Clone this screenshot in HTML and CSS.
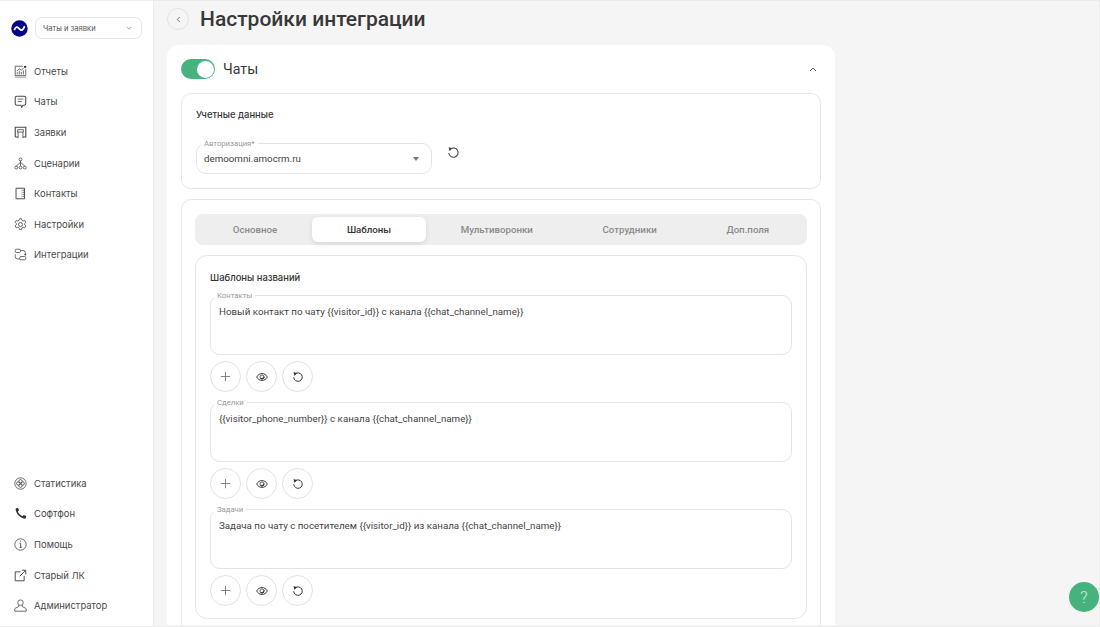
FILE: index.html
```html
<!DOCTYPE html>
<html lang="ru">
<head>
<meta charset="utf-8">
<title>Настройки интеграции</title>
<link rel="stylesheet" href="styles.css">
</head>
<body>
<svg class="defs" width="0" height="0" aria-hidden="true">
  <symbol id="i-reset" viewBox="0 0 14 14"><path d="M3.700 3.300A5 5 0 1 1 2 7.800" fill="none" stroke="currentColor" stroke-width="1.150" stroke-linecap="round"/><path d="M1.800 1.300l4.200 1.200-3.300 3z" fill="currentColor"/></symbol>
  <symbol id="i-plus" viewBox="0 0 14 14"><path d="M7 1v12M1 7h12" fill="none" stroke="currentColor" stroke-width="1"/></symbol>
  <symbol id="i-eye" viewBox="0 0 14 14"><path d="M.8 7C2.200 4.300 4.400 3 7 3s4.800 1.300 6.200 4C11.800 9.700 9.600 11 7 11S2.200 9.700.8 7z" fill="none" stroke="currentColor" stroke-width="1.100"/><circle cx="7" cy="7" r="2.400" fill="none" stroke="currentColor" stroke-width=".9"/><path d="M9.400 6.600A2.400 2.400 0 0 1 5.400 8.800C7.400 8.800 8.800 8 9.400 6.600z" fill="currentColor" stroke="currentColor" stroke-width=".7"/></symbol>
</svg>
<div class="app">
  <aside class="sidebar">
    <div class="brand">
      <svg class="logo" viewBox="0 0 18 18"><circle cx="9" cy="9" r="8.700" fill="#06068c"/><path d="M3.800 10C4.800 7.300 6.500 7 8 8.500s3.200 3.200 4.600 1.300c.6-.8 1-1.500 1.500-2.600" fill="none" stroke="#fff" stroke-width="1.900" stroke-linecap="round"/></svg>
      <div class="switcher"><span>Чаты и заявки</span><svg class="sw-chev" viewBox="0 0 8 5"><path d="M1 1l3 3 3-3" fill="none" stroke="#888" stroke-width=".9"/></svg></div>
    </div>
    <nav class="nav">
      <div class="nav-group">
        <a class="nav-item"><svg viewBox="0 0 16 16"><path d="M11 1.500H1.500v11.500h13V5"/><path d="M1 15h14" stroke="#aaa" stroke-width="1.500"/><path d="M4 11.500V9M6.500 11.500V7M9 11.500V8.500M11.500 11.500V6.500M3.500 7.500L6.500 4.500 9 6.500 12 3.500"/><circle cx="13.700" cy="2.300" r="1.500" fill="#333" stroke="none"/></svg>Отчеты</a>
        <a class="nav-item"><svg viewBox="0 0 16 16"><path d="M3.500 1.500h9A2 2 0 0 1 14.500 3.500v7a2 2 0 0 1-2 2H11L9.500 15 8.500 12.500h-5a2 2 0 0 1-2-2v-7a2 2 0 0 1 2-2z" stroke-width="1.300"/><path d="M4.500 5h7M4.500 8h5"/></svg>Чаты</a>
        <a class="nav-item"><svg viewBox="0 0 16 16"><path d="M1.500 13.500v-12h13v12h-3.500M1.500 13.500H5" stroke-width="1.400"/><path d="M4.500 4.500h7v3h-7zM5 7.500V15M11 7.500V15"/></svg>Заявки</a>
        <a class="nav-item"><svg viewBox="0 0 16 16"><circle cx="8" cy="3" r="1.800"/><circle cx="2.800" cy="13" r="1.800"/><circle cx="8" cy="13" r="1.800"/><circle cx="13.200" cy="13" r="1.800"/><path d="M8 4.800v6.400M2.800 11.200L8 6.500l5.200 4.700"/></svg>Сценарии</a>
        <a class="nav-item"><svg viewBox="0 0 16 16"><path d="M2.500 1.500h10.500v13H2.500z" stroke-width="1.200"/><path d="M13 4h-2.500M13 6.500h-2.500M13 9h-2.500M13 11.500h-2.500"/><path d="M9.500 1.500v13"  stroke="#999" stroke-width=".5"/></svg>Контакты</a>
        <a class="nav-item"><svg viewBox="0 0 16 16"><path d="M6.700 1h2.600l.5 2 1.500.8 2-.7 1.300 2.300-1.500 1.400v1.500l1.500 1.400-1.300 2.300-2-.7-1.500.8-.5 2H6.700l-.5-2-1.500-.8-2 .7-1.300-2.300 1.500-1.400V7L1.400 5.400l1.300-2.300 2 .7 1.500-.8z"/><circle cx="8" cy="8" r="2.500"/></svg>Настройки</a>
        <a class="nav-item"><svg viewBox="0 0 16 16"><path d="M3 1.500h3.500A1.500 1.500 0 0 1 8 3v1A1.500 1.500 0 0 1 6.500 5.500H3A1.500 1.500 0 0 1 1.500 4V3A1.500 1.500 0 0 1 3 1.500zM8.500 10.500H13a1.500 1.500 0 0 1 1.500 1.500v1a1.500 1.500 0 0 1-1.500 1.500H8.500A1.500 1.500 0 0 1 7 13v-1a1.500 1.500 0 0 1 1.500-1.500zM8 3h3a3 3 0 0 1 3 3v3l-1.500-1.500M14 9l1-1.500M1.500 8v2.500a3 3 0 0 0 3 3H7"/></svg>Интеграции</a>
      </div>
      <div class="nav-group">
        <a class="nav-item"><svg viewBox="0 0 16 16"><circle cx="8" cy="8" r="7"/><circle cx="8" cy="5.300" r="2.100"/><circle cx="8" cy="10.700" r="2.100"/><circle cx="5.300" cy="8" r="2.100"/><circle cx="10.700" cy="8" r="2.100"/></svg>Статистика</a>
        <a class="nav-item"><svg viewBox="0 0 16 16"><path class="solid" d="M2.800 1.400L5 1l1.200 3.300L4.700 5.600C5.600 8 7.800 10.300 10.500 11.300l1.300-1.500 3.200 1.400-.4 2.300c-.1.700-.9 1.200-1.700 1C7.500 13.600 2.700 8.600 2 3.200c-.1-.8.200-1.600.8-1.800z"/></svg>Софтфон</a>
        <a class="nav-item"><svg viewBox="0 0 16 16"><circle cx="8" cy="8" r="7"/><path d="M6.700 6.500h1.500v5M6.800 11.500h2.800M7.600 3.800h1" stroke-width="1.100"/></svg>Помощь</a>
        <a class="nav-item"><svg viewBox="0 0 16 16"><path d="M8 3.500H1.500v11h11V8.500M9.500 1.500h5v5M14.500 1.500L7 9" stroke-width="1.200"/></svg>Старый ЛК</a>
        <a class="nav-item"><svg viewBox="0 0 16 16"><circle cx="8" cy="4.500" r="3.400"/><path d="M5.800 7.500V9.300L1.500 11.500a1 1 0 0 0-.5 1V15h14v-2.500a1 1 0 0 0-.5-1L10.200 9.300V7.500"/></svg>Администратор</a>
      </div>
    </nav>
  </aside>
  <main class="main">
    <header class="page-head">
      <button class="back"><svg viewBox="0 0 6 8"><path d="M4.500 1L1.500 4l3 3" fill="none" stroke="#555" stroke-width="1"/></svg></button>
      <h1>Настройки интеграции</h1>
    </header>
    <section class="card">
      <div class="card-head">
        <div class="toggle"><span class="knob"></span></div>
        <h2>Чаты</h2>
        <svg class="collapse" viewBox="0 0 8 5"><path d="M1 4l3-3 3 3" fill="none" stroke="#555" stroke-width="1"/></svg>
      </div>
      <div class="panel creds">
        <h3>Учетные данные</h3>
        <div class="auth-row">
          <div class="field select">
            <label>Авторизация*</label>
            <span>demoomni.amocrm.ru</span>
            <i class="caret"></i>
          </div>
          <svg class="reset-plain"><use href="#i-reset"/></svg>
        </div>
      </div>
      <div class="panel settings">
        <div class="tabs">
          <div class="tab">Основное</div>
          <div class="tab active">Шаблоны</div>
          <div class="tab">Мультиворонки</div>
          <div class="tab">Сотрудники</div>
          <div class="tab">Доп.поля</div>
        </div>
        <div class="panel templates">
          <h3>Шаблоны названий</h3>
          <div class="field area"><label>Контакты</label><span>Новый контакт по чату {{visitor_id}} с канала {{chat_channel_name}}</span></div>
          <div class="actions">
            <button class="round"><svg class="ic-plus"><use href="#i-plus"/></svg></button>
            <button class="round"><svg class="ic"><use href="#i-eye"/></svg></button>
            <button class="round"><svg class="ic"><use href="#i-reset"/></svg></button>
          </div>
          <div class="field area"><label>Сделки</label><span>{{visitor_phone_number}} с канала {{chat_channel_name}}</span></div>
          <div class="actions">
            <button class="round"><svg class="ic-plus"><use href="#i-plus"/></svg></button>
            <button class="round"><svg class="ic"><use href="#i-eye"/></svg></button>
            <button class="round"><svg class="ic"><use href="#i-reset"/></svg></button>
          </div>
          <div class="field area"><label>Задачи</label><span>Задача по чату с посетителем {{visitor_id}} из канала {{chat_channel_name}}</span></div>
          <div class="actions">
            <button class="round"><svg class="ic-plus"><use href="#i-plus"/></svg></button>
            <button class="round"><svg class="ic"><use href="#i-eye"/></svg></button>
            <button class="round"><svg class="ic"><use href="#i-reset"/></svg></button>
          </div>
        </div>
      </div>
    </section>
  </main>
</div>
<button class="help">?</button>
</body>
</html>
```
FILE: styles.css
```css
* { box-sizing: border-box; }
html, body { height: 100%; }
body {
  margin: 0;
  overflow: hidden;
  background: #f5f5f5;
  color: #333;
  font-family: Inter, "Liberation Sans", sans-serif;
}
.defs { display: block; height: 0; }
.app {
  display: flex;
  height: 627px;
  padding: 1px;
  overflow: hidden;
  border: 1px solid #ececec;
  border-width: 1px 1px 1px 0;
}
.sidebar {
  flex: 0 0 154px;
  display: flex;
  flex-direction: column;
  background: #fff;
  border-right: 1px solid #ececec;
  margin: -1px 0 -1px -1px;
  padding-left: 1px;
}
.brand {
  display: flex;
  align-items: center;
  gap: 7px;
  padding: 16px 11px 0 10px;
}
.logo { width: 17px; height: 17px; flex: none; }
.switcher {
  flex: 1;
  height: 22px;
  display: flex;
  align-items: center;
  justify-content: space-between;
  padding: 0 9px 0 7px;
  border: 1px solid #e4e4e4;
  border-radius: 7px;
  font-size: 7.600px;
  color: #555;
}
.sw-chev { width: 6px; height: 4px; }
.nav {
  flex: 1;
  display: flex;
  flex-direction: column;
  justify-content: space-between;
  padding: 17px 0 5px;
}
.nav-group { display: flex; flex-direction: column; }
.nav-item {
  height: 30.6px;
  display: flex;
  align-items: center;
  gap: 7px;
  padding-left: 13px;
  font-size: 9.450px;
  color: #4a4a4a;
}
.nav-item svg {
  width: 13px;
  height: 13px;
  flex: none;
  fill: none;
  stroke: #4a4a4a;
  stroke-width: 1;
}
.nav-item .solid { fill: #333; stroke: none; }
.main {
  flex: 0 0 auto;
  width: 668px;
  margin-left: 13px;
  display: flex;
  flex-direction: column;
  overflow: hidden;
}
.page-head {
  height: 43px;
  flex: none;
  display: flex;
  align-items: center;
  gap: 11px;
  padding-bottom: 9px;
}
.back {
  width: 22px;
  height: 22px;
  padding: 0;
  border: 1px solid #e2e2e2;
  border-radius: 50%;
  background: #f5f5f5;
  display: flex;
  align-items: center;
  justify-content: center;
}
.back svg { width: 5px; height: 7px; }
h1 {
  margin: 0;
  font: 500 21px Roboto, sans-serif;
  color: #383838;
}
.card {
  flex: 1;
  min-height: 0;
  overflow: hidden;
  background: #fff;
  border-radius: 12px 12px 0 0;
  padding: 14px;
  display: flex;
  flex-direction: column;
  gap: 10px;
}
.card-head {
  display: flex;
  align-items: center;
  height: 20px;
  margin-bottom: 4px;
  flex: none;
}
.toggle {
  width: 34px;
  height: 20px;
  border-radius: 10px;
  background: #46b37f;
  padding: 1.500px;
  display: flex;
  justify-content: flex-end;
}
.knob { width: 17px; height: 17px; border-radius: 50%; background: #fff; }
h2 {
  margin: 0 0 0 8px;
  flex: 1;
  font: 400 14.200px Roboto, sans-serif;
  color: #383838;
}
.collapse { width: 8px; height: 5px; margin-right: 4px; }
.panel {
  border: 1px solid #e6e6e6;
  border-radius: 10px;
  background: #fff;
}
.creds { flex: none; height: 96px; padding: 14px 14px 0; }
h3 {
  margin: 0;
  font: 500 9.450px/14px Inter, sans-serif;
  color: #333;
}
.auth-row {
  display: flex;
  align-items: flex-start;
  margin-top: 21px;
  gap: 15px;
}
.field {
  position: relative;
  border: 1px solid #e4e4e4;
  border-radius: 10px;
  font: 400 9.750px/14px Roboto, sans-serif;
  color: #444;
}
.field label {
  position: absolute;
  top: -5px;
  left: 4px;
  padding: 0 3px;
  background: #fff;
  font: 400 7.700px/9px Roboto, sans-serif;
  color: #999;
}
.select {
  width: 236px;
  height: 31px;
  display: flex;
  align-items: center;
  justify-content: space-between;
  padding: 0 12px 0 7px;
}
.caret {
  width: 0;
  height: 0;
  border: 3.500px solid transparent;
  border-top: 4px solid #777;
  border-bottom: 0;
}
.reset-plain { width: 13px; height: 13px; margin-top: 3px; color: #444; }
.settings { flex: none; height: 500px; padding: 14px 13px 0; }
.tabs {
  display: flex;
  height: 31px;
  padding: 3px;
  background: #eee;
  border-radius: 8px;
}
.tab {
  flex: 1 1 auto;
  display: flex;
  align-items: center;
  justify-content: center;
  padding: 0 34px;
  border-radius: 6px;
  font: 500 9.700px Roboto, sans-serif;
  color: #8a8a8a;
}
.tab.active {
  background: #fff;
  color: #333;
  box-shadow: 0 2px 5px rgba(0, 0, 0, .1);
}
.templates {
  margin-top: 10px;
  height: 364px;
  border-radius: 12px;
  padding: 15px 14px 0;
}
.area {
  height: 60px;
  padding: 9px 8px;
}
.area label { left: 3px; }
h3 + .area { margin-top: 10px; }
.actions + .area { margin-top: 10px; }
.actions {
  display: flex;
  gap: 5px;
  margin-top: 6px;
}
.round {
  width: 31px;
  height: 31px;
  padding: 0;
  border: 1px solid #e2e2e2;
  border-radius: 50%;
  background: #fff;
  color: #333;
  display: flex;
  align-items: center;
  justify-content: center;
}
.ic { width: 12px; height: 12px; }
.ic-plus { width: 11px; height: 11px; color: #666; }
.help {
  position: fixed;
  left: 1069px;
  top: 582px;
  width: 30px;
  height: 30px;
  padding: 0;
  border: 0;
  border-radius: 50%;
  background: #46b37f;
  color: #cfeee0;
  font: 300 16px Roboto, sans-serif;
}
```
